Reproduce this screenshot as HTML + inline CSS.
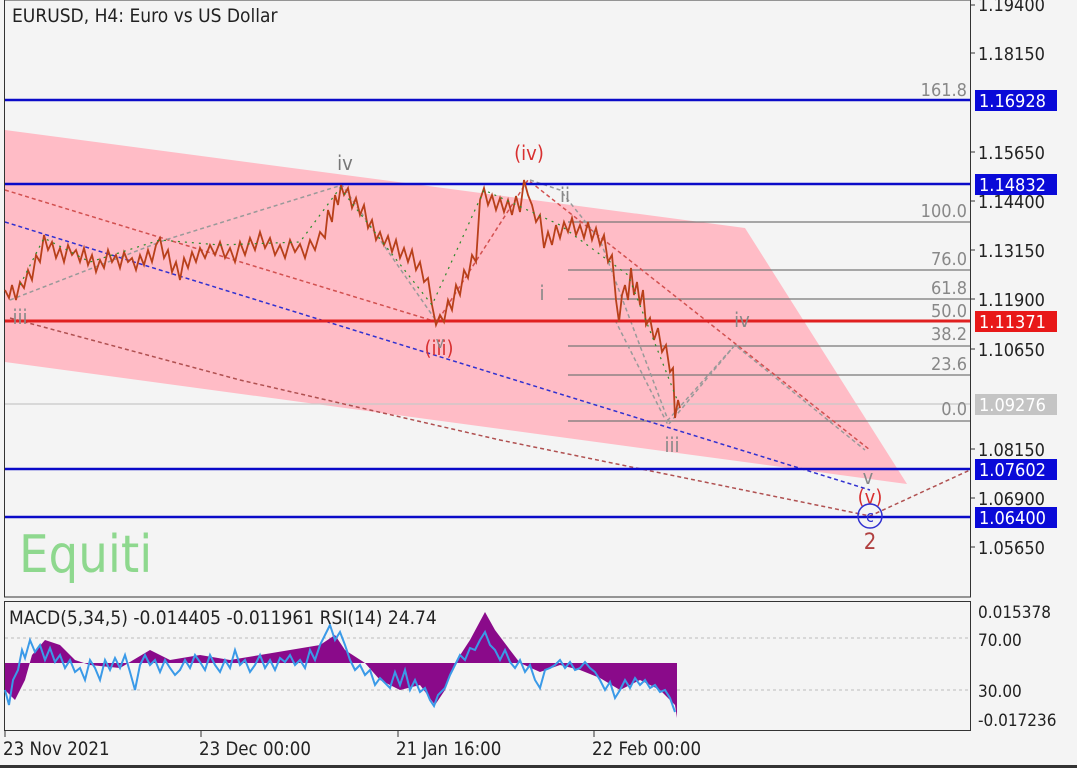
<!DOCTYPE html>
<html><head><meta charset="utf-8"><style>
html,body{margin:0;padding:0;background:#f4f4f4;width:1077px;height:768px;overflow:hidden}
svg{display:block}
text{font-family:"DejaVu Sans Condensed","Liberation Sans",sans-serif}
</style></head><body>
<svg width="1077" height="768" viewBox="0 0 1077 768" xmlns="http://www.w3.org/2000/svg">
<rect width="1077" height="768" fill="#f4f4f4"/>
<polygon points="5,130 745,228 907,484 5,362" fill="#ffbcc6"/>
<rect x="4.5" y="0" width="966" height="597" fill="none" stroke="#333" stroke-width="1"/>
<rect x="4.5" y="601.5" width="966" height="129" fill="none" stroke="#333" stroke-width="1"/>
<g stroke="#777" stroke-width="1.3">
<line x1="568" y1="222" x2="970" y2="222"/>
<line x1="568" y1="270" x2="970" y2="270"/>
<line x1="568" y1="299" x2="970" y2="299"/>
<line x1="568" y1="346" x2="970" y2="346"/>
<line x1="568" y1="375" x2="970" y2="375"/>
<line x1="568" y1="421" x2="970" y2="421"/>
</g>
<line x1="5" y1="404" x2="970" y2="404" stroke="#c8c8c8" stroke-width="1.2"/>
<g font-size="18" fill="#888" text-anchor="end">
<text x="967" y="96">161.8</text><text x="967" y="217">100.0</text><text x="967" y="265">76.0</text>
<text x="967" y="294">61.8</text><text x="967" y="317">50.0</text><text x="967" y="340">38.2</text>
<text x="967" y="370">23.6</text><text x="967" y="415">0.0</text>
</g>
<g fill="none" stroke-width="1.5" stroke-dasharray="4,3">
<polyline points="5,190 437,322 528,180 870,450" stroke="#d2504f"/>
<polyline points="10,318 240,380 500,440 870,516 970,470" stroke="#b05050"/>
<polyline points="5,222 870,490" stroke="#3030d0"/>
<polyline points="10,300 165,240 342,185 437,322" stroke="#999"/>
<polyline points="530,180 560,190 600,240 668,420 735,345 865,450" stroke="#999"/>
<polyline points="615,320 668,425 735,345" stroke="#999"/>
</g>
<g stroke="#0a0ac8" stroke-width="2.5">
<line x1="5" y1="100" x2="970" y2="100"/><line x1="5" y1="184" x2="970" y2="184"/>
<line x1="5" y1="469" x2="970" y2="469"/><line x1="5" y1="517" x2="970" y2="517"/>
</g>
<line x1="5" y1="321" x2="970" y2="321" stroke="#e02020" stroke-width="3"/>
<polyline fill="none" stroke="#b8401a" stroke-width="1.8" points="5,290 9,298 12,285 16,300 20,282 24,288 28,270 32,280 36,255 40,262 44,235 48,250 52,242 56,258 60,248 64,262 68,245 72,255 76,250 80,262 84,248 88,265 92,255 96,272 100,260 104,268 108,250 112,262 116,255 120,268 124,252 128,262 132,258 136,270 140,255 144,265 148,250 152,262 156,245 160,238 164,258 168,250 172,272 176,262 180,280 184,258 188,268 192,252 196,262 200,248 205,258 210,245 215,255 220,242 225,258 230,248 235,262 240,242 245,255 250,238 255,250 260,232 265,248 270,238 275,255 280,245 285,258 290,240 295,252 300,244 305,258 310,240 315,250 320,232 325,238 328,210 332,222 335,195 338,205 341,185 344,195 348,188 352,208 356,198 360,215 364,205 368,228 372,220 376,240 380,232 384,245 388,236 392,252 396,240 400,258 404,248 408,262 412,250 416,270 420,262 424,282 428,278 432,305 436,325 440,315 444,322 448,300 452,310 456,285 460,295 464,270 468,278 472,255 476,262 480,200 484,188 488,205 492,195 496,210 500,198 504,212 508,200 512,215 516,196 520,212 524,180 528,195 532,205 536,222 540,215 544,248 548,232 552,245 556,225 560,238 564,222 568,232 572,218 576,235 580,225 584,238 588,222 592,240 596,228 600,245 604,235 608,262 612,255 616,300 619,322 622,295 625,285 628,300 631,268 634,295 637,282 640,305 643,290 646,325 650,318 654,340 658,328 662,352 666,345 670,372 673,368 675,418 678,400 680,408"/>
<polyline fill="none" stroke="#2a8a2a" stroke-width="1.2" stroke-dasharray="2,5" points="20,285 44,238 90,262 160,240 220,245 300,242 340,188 432,305 484,190 560,225 628,275 678,402"/>
<g font-size="20" text-anchor="middle">
<text x="345" y="170" fill="#777">iv</text>
<text x="529" y="160" fill="#d83030">(iv)</text>
<text x="565" y="202" fill="#888">ii</text>
<text x="542" y="300" fill="#888">i</text>
<text x="20" y="324" fill="#888">iii</text>
<text x="439" y="355" fill="#d83030">(iii)</text>
<text x="440" y="348" fill="#888" font-size="16">v</text>
<text x="742" y="327" fill="#888">iv</text>
<text x="672" y="452" fill="#888">iii</text>
<text x="868" y="484" fill="#888">v</text>
<text x="870" y="504" fill="#d83030">(v)</text>
<text x="870" y="549" fill="#b04040" font-size="22">2</text>
</g>
<circle cx="870" cy="516" r="12" fill="none" stroke="#3030d0" stroke-width="1.5"/>
<text x="870" y="522" fill="#3030d0" font-size="16" text-anchor="middle">c</text>
<text x="12" y="22" font-size="19" fill="#222">EURUSD, H4:  Euro vs US Dollar</text>
<text x="19" y="572" font-size="52" fill="#8ed88e">Equiti</text>
<line x1="970.5" y1="0" x2="970.5" y2="597" stroke="#333"/>
<g stroke="#333"><line x1="970" y1="5" x2="975" y2="5"/><line x1="970" y1="53" x2="975" y2="53"/><line x1="970" y1="152" x2="975" y2="152"/><line x1="970" y1="201" x2="975" y2="201"/><line x1="970" y1="250" x2="975" y2="250"/><line x1="970" y1="299" x2="975" y2="299"/><line x1="970" y1="349" x2="975" y2="349"/><line x1="970" y1="449" x2="975" y2="449"/><line x1="970" y1="498" x2="975" y2="498"/><line x1="970" y1="547" x2="975" y2="547"/></g>
<g font-size="18" fill="#222">
<text x="978" y="11">1.19400</text><text x="978" y="60">1.18150</text><text x="978" y="159">1.15650</text>
<text x="978" y="208">1.14400</text><text x="978" y="257">1.13150</text><text x="978" y="306">1.11900</text>
<text x="978" y="356">1.10650</text><text x="978" y="456">1.08150</text><text x="978" y="505">1.06900</text>
<text x="978" y="554">1.05650</text>
</g>
<g font-size="18" fill="#fff">
<rect x="975" y="90" width="82" height="21" fill="#0a0ad8"/><text x="979" y="107">1.16928</text>
<rect x="975" y="174" width="82" height="21" fill="#0a0ad8"/><text x="979" y="191">1.14832</text>
<rect x="975" y="311" width="82" height="21" fill="#e81818"/><text x="979" y="328">1.11371</text>
<rect x="975" y="394" width="82" height="21" fill="#c4c4c4"/><text x="979" y="411">1.09276</text>
<rect x="975" y="459" width="82" height="21" fill="#0a0ad8"/><text x="979" y="476">1.07602</text>
<rect x="975" y="507" width="82" height="21" fill="#0a0ad8"/><text x="979" y="524">1.06400</text>
</g>
<g stroke="#bbb" stroke-dasharray="3,3"><line x1="5" y1="638" x2="970" y2="638"/><line x1="5" y1="690" x2="970" y2="690"/></g>
<polygon fill="#8a0a8a" points="5,663 5,690 15,700 25,680 32,655 45,640 60,645 75,660 90,665 120,668 150,650 170,660 200,655 230,660 260,655 290,650 320,645 335,635 345,650 365,663 380,680 400,690 420,685 435,705 445,690 455,663 470,640 485,612 495,630 510,650 520,663 540,672 560,665 580,670 600,678 620,690 640,680 660,690 675,705 677,718 677,663"/>
<polyline fill="none" stroke="#3a9ae8" stroke-width="2" points="5,690 9,705 13,680 18,670 22,650 25,658 30,640 35,652 40,645 45,660 50,648 55,662 60,655 65,668 70,660 75,672 80,668 85,680 90,660 95,668 100,680 105,660 110,670 115,658 120,668 125,655 130,672 135,690 140,665 145,655 150,665 155,660 160,672 165,660 170,668 175,675 180,670 185,660 190,668 195,655 200,662 205,670 210,655 215,665 220,672 225,660 230,668 235,650 240,665 245,660 250,672 255,665 260,655 265,668 270,660 275,670 280,658 285,662 290,655 295,665 300,660 305,668 310,650 315,660 320,645 325,635 330,625 335,640 340,632 345,645 350,660 355,670 360,665 365,675 370,670 375,685 380,678 390,688 395,672 400,685 405,670 410,690 415,680 420,692 425,688 430,700 434,706 438,695 445,688 450,675 455,665 460,655 465,660 470,648 475,650 480,640 485,632 490,645 495,650 500,660 505,650 510,662 515,668 520,660 525,672 530,665 535,680 540,688 545,670 550,668 555,665 560,660 565,668 570,662 575,670 580,668 585,662 590,668 595,672 600,680 605,690 610,682 615,698 620,690 625,680 630,688 635,678 640,685 645,680 650,688 655,685 660,692 665,690 670,698 675,712"/>
<text x="9" y="624" font-size="19" fill="#222">MACD(5,34,5) -0.014405 -0.011961 RSI(14) 24.74</text>
<g font-size="17" fill="#222">
<text x="978" y="618">0.015378</text><text x="978" y="646">70.00</text>
<text x="978" y="697">30.00</text><text x="978" y="726">-0.017236</text>
</g>
<line x1="970.5" y1="601" x2="970.5" y2="731" stroke="#333"/>
<g stroke="#333"><line x1="5" y1="731" x2="5" y2="737"/><line x1="201" y1="731" x2="201" y2="737"/><line x1="398" y1="731" x2="398" y2="737"/><line x1="594" y1="731" x2="594" y2="737"/></g>
<g font-size="18.5" fill="#222">
<text x="3" y="755">23 Nov 2021</text><text x="199" y="755">23 Dec 00:00</text>
<text x="396" y="755">21 Jan 16:00</text><text x="592" y="755">22 Feb 00:00</text>
</g>
<rect x="0" y="765" width="1077" height="3" fill="#333"/>
</svg>
</body></html>
